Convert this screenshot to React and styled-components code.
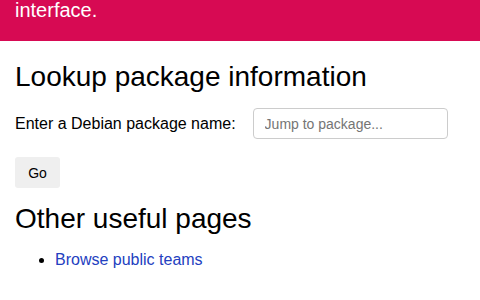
import React from "react";
import styled, { createGlobalStyle } from "styled-components";

//page defaults
const GlobalStyle = createGlobalStyle`
  body {
    margin: 0;
    background: #ffffff;
    font-family: "Liberation Sans", Arial, sans-serif;
    color: #000000;
  }
`;

const Banner = styled.header`
  background: #d70a53;
  color: white;
  height: 41px;
  padding: 0 15px;
  overflow: hidden;
`;

const BannerText = styled.div`
  font-size: 20px;
  margin-top: -1px;
`;

//main content column
const Main = styled.main`
  padding: 0 15px;
`;

//section headings
const Heading = styled.h2`
  font-size: 28px;
  font-weight: normal;
  margin: ${props => props.top}px 0 0;
`;

//search form
const Form = styled.form`
  margin: 0;
`;

const Row = styled.div`
  display: flex;
  align-items: center;
  margin-top: 15px;
`;

const Label = styled.label`
  font-size: 16px;
  margin-right: 17px;
`;

const Input = styled.input`
  box-sizing: border-box;
  width: 195px;
  height: 31px;
  padding: 0 11px;
  border: 1px solid #cccccc;
  border-radius: 4px;
  font-family: "Liberation Sans", Arial, sans-serif;
  font-size: 14px;
  :focus {
    outline: none;
  }
  ::placeholder {
    color: #999999;
  }
`;

const GoButton = styled.button`
  display: block;
  margin-top: 18px;
  width: 45px;
  height: 31px;
  border: none;
  border-radius: 3px;
  background: #efefef;
  color: #000000;
  font-family: "Liberation Sans", Arial, sans-serif;
  font-size: 14px;
  padding: 0;
`;

//useful links list
const List = styled.ul`
  margin: 16px 0 0;
  padding-left: 40px;
  font-size: 16px;
`;

const Link = styled.a`
  color: #2340c0;
  text-decoration: none;
`;

function App() {
  return (
    <>
      <GlobalStyle />
      <Banner>
        <BannerText>interface.</BannerText>
      </Banner>
      <Main>
        <Heading as="h1" top={20}>
          Lookup package information
        </Heading>
        <Form onSubmit={e => e.preventDefault()}>
          <Row>
            <Label htmlFor="pkg">Enter a Debian package name:</Label>
            <Input id="pkg" placeholder="Jump to package..." autoComplete="off" />
          </Row>
          <GoButton type="submit">Go</GoButton>
        </Form>
        <Heading top={15}>Other useful pages</Heading>
        <List>
          <li>
            <Link href="#">Browse public teams</Link>
          </li>
        </List>
      </Main>
    </>
  );
}

export default App;
